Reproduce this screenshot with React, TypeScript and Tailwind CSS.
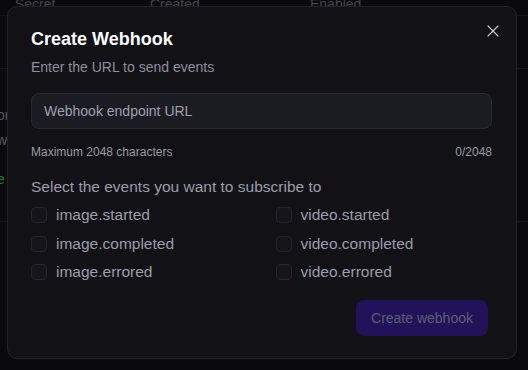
import { X } from "lucide-react";

const events = [
  ["image.started", "video.started"],
  ["image.completed", "video.completed"],
  ["image.errored", "video.errored"],
];

function Checkbox({ label }: { label: string }) {
  return (
    <label className="flex items-center gap-[9px] h-[20px]">
      <span className="w-[16px] h-[16px] rounded-[4px] border border-[#24242d] bg-[#15151b]" />
      <span className="text-[15.5px] text-[#9d9cab]">{label}</span>
    </label>
  );
}

export default function App() {
  return (
    <div
      className="relative w-[528px] h-[370px] overflow-hidden bg-[#0a0a0e]"
      style={{ fontFamily: '"Liberation Sans", Arial, sans-serif' }}
    >
      {/* Background table, dimmed behind the dialog */}
      <div className="opacity-60">
        <div className="flex h-[24px] items-end border-b border-[#1c1c24] text-[14px] text-[#6b6b78] -mt-[8px]">
          <span className="ml-[15px] w-[135px]">Secret</span>
          <span className="w-[160px]">Created</span>
          <span>Enabled</span>
        </div>
        <div className="h-[53px] border-b border-[#1c1c24]" />
        <div className="h-[153px] border-b border-[#1c1c24] pt-[34px] text-[14px] text-[#8a8a96] leading-[25px]">
          <p className="-ml-[3px]">or</p>
          <p className="-ml-[3px]">w</p>
          <p className="-ml-[3px] mt-[14px] text-[#22c55e]">e</p>
        </div>
      </div>

      {/* Dialog */}
      <div className="absolute left-[7px] top-[6px] w-[510px] h-[353px] rounded-[10px] border border-[#23232c] bg-[#111116] pl-[23px] pr-6 pt-[21px] pb-[22px] flex flex-col">
        <button className="absolute right-[13px] top-[14px] text-[#c9c9d2]">
          <X size={20} strokeWidth={1.4} />
        </button>

        <h2 className="text-[18px] font-bold text-white leading-[22px]">Create Webhook</h2>
        <p className="mt-[8px] text-[14px] text-[#8f8e9e] leading-[18px]">Enter the URL to send events</p>

        <div className="mt-[17px] h-[36px] shrink-0 rounded-[8px] border border-[#2a2a34] bg-[#1b1b22] flex items-center px-[12px]">
          <span className="text-[14px] text-[#a09fae]">Webhook endpoint URL</span>
        </div>

        <div className="mt-[16px] flex justify-between text-[12px] text-[#9a99a7] leading-[14px]">
          <span>Maximum 2048 characters</span>
          <span>0/2048</span>
        </div>

        <p className="mt-[18px] text-[15.5px] text-[#9d9cab] leading-[20px]">
          Select the events you want to subscribe to
        </p>

        <div className="mt-[8px] grid grid-cols-2 gap-y-[8.5px]">
          {events.map(([a, b]) => (
            <div key={a} className="contents">
              <Checkbox label={a} />
              <div className="pl-[14px]">
                <Checkbox label={b} />
              </div>
            </div>
          ))}
        </div>

        <div className="mt-auto flex justify-end pr-[4px]">
          <button className="h-[36px] w-[132px] shrink-0 rounded-[8px] bg-[#20135a] text-[14px] text-[#5f5e6e]">
            Create webhook
          </button>
        </div>
      </div>
    </div>
  );
}
